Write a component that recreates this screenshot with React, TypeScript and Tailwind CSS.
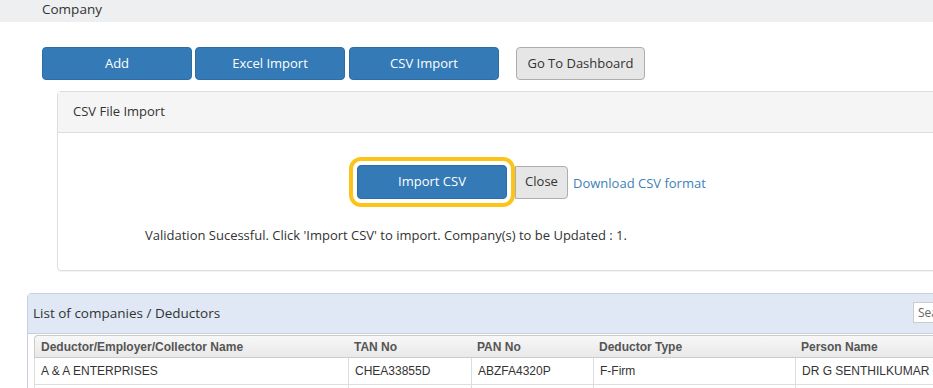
import React from 'react'

const seg = { fontFamily: '"Open Sans", "Noto Sans", sans-serif' }

const rows = [
  { name: 'A & A ENTERPRISES', tan: 'CHEA33855D', pan: 'ABZFA4320P', type: 'F-Firm', person: 'DR G SENTHILKUMAR' },
]

export default function App() {
  return (
    <div className="w-[933px] h-[388px] overflow-hidden bg-white text-[#333]" style={seg}>
      {/* Page title */}
      <div className="h-[22px] bg-[#eeeff1] pl-[42px] text-[13.5px] leading-[18px]">Company</div>

      {/* Action buttons */}
      <div className="flex items-center mt-[25px] pl-[42px]">
        <button className="w-[150px] h-[33px] rounded bg-[#337ab7] border border-[#2e6da4] text-white text-[13px]">Add</button>
        <button className="w-[150px] h-[33px] ml-[3px] rounded bg-[#337ab7] border border-[#2e6da4] text-white text-[13px]">Excel Import</button>
        <button className="w-[150px] h-[33px] ml-[4px] rounded bg-[#337ab7] border border-[#2e6da4] text-white text-[13px]">CSV Import</button>
        <button className="w-[129px] h-[33px] ml-[17px] rounded bg-[#e6e6e6] border border-[#adadad] text-[#333] text-[13px]">Go To Dashboard</button>
      </div>

      {/* CSV import panel */}
      <div className="ml-[57px] mt-[11px] w-[960px] h-[180px] border border-[#ddd] rounded shadow-[0_1px_1px_rgba(0,0,0,0.05)]">
        <div className="h-[41px] bg-[#f5f5f5] border-b border-[#ddd] pl-[15px] flex items-center text-[13px]">CSV File Import</div>
        <div className="flex items-center pl-[299px] pt-[32px]">
          <div className="relative">
            <button className="w-[150px] h-[34px] rounded bg-[#337ab7] border border-[#2e6da4] text-white text-[13px]">Import CSV</button>
            <div className="absolute -left-[8px] -top-[8px] w-[166px] h-[50px] border-[4px] border-[#fcc419] rounded-[12px]" />
          </div>
          <button className="w-[53px] h-[33px] ml-[8px] rounded-r bg-[#e6e6e6] border border-[#adadad] text-[#333] text-[13px]">Close</button>
          <a className="ml-[5px] mt-[4px] text-[13px] text-[#3f7fb8]">Download CSV format</a>
        </div>
        <div className="pl-[87px] mt-[27px] text-[13px]">
          Validation Sucessful. Click 'Import CSV' to import. Company(s) to be Updated : 1.
        </div>
      </div>

      {/* Companies list */}
      <div className="ml-[27px] mt-[22px] w-[960px] border border-[#c5d1df] rounded-tl">
        <div className="h-[40px] bg-[#dfe8f4] border-b border-[#c5d1df] flex items-center pl-[5px]">
          <span className="w-[880px] text-[13.5px]">List of companies / Deductors</span>
          <input
            className="w-[60px] h-[21px] mt-[-2px] border border-[#ccc] bg-white px-[4px] text-[12px] text-[#666] placeholder:text-[#666]"
            placeholder="Search"
          />
        </div>
        <div className="pl-[6px] pt-[1px] bg-white">
          <table
            className="table-fixed w-[941px] border-separate border-spacing-0 text-[12px]"
            style={{ fontFamily: '"Liberation Sans", Arial, sans-serif' }}
          >
            <colgroup>
              <col className="w-[314px]" />
              <col className="w-[123px]" />
              <col className="w-[122px]" />
              <col className="w-[202px]" />
              <col className="w-[180px]" />
            </colgroup>
            <thead>
              <tr className="h-[23px] bg-gradient-to-b from-[#f8f8f8] to-[#e8e8e8] text-[#555] font-bold text-left">
                <th className="pl-[6px] border-t border-l border-b border-[#ccc] rounded-tl">Deductor/Employer/Collector Name</th>
                <th className="pl-[6px] border-t border-b border-[#ccc]">TAN No</th>
                <th className="pl-[6px] border-t border-b border-[#ccc]">PAN No</th>
                <th className="pl-[6px] border-t border-b border-[#ccc]">Deductor Type</th>
                <th className="pl-[6px] border-t border-b border-[#ccc]">Person Name</th>
              </tr>
            </thead>
            <tbody className="text-[#333]">
              {rows.map((r) => (
                <tr key={r.tan} className="h-[27px]">
                  <td className="pl-[6px] border-l border-b border-[#ddd]">{r.name}</td>
                  <td className="pl-[6px] border-l border-b border-[#ddd]">{r.tan}</td>
                  <td className="pl-[6px] border-l border-b border-[#ddd]">{r.pan}</td>
                  <td className="pl-[6px] border-l border-b border-[#ddd]">{r.type}</td>
                  <td className="pl-[6px] border-l border-b border-[#ddd]">{r.person}</td>
                </tr>
              ))}
              <tr className="h-[27px]">
                <td className="border-l border-[#ddd]" />
                <td className="border-l border-[#ddd]" />
                <td className="border-l border-[#ddd]" />
                <td className="border-l border-[#ddd]" />
                <td className="border-l border-[#ddd]" />
              </tr>
            </tbody>
          </table>
        </div>
      </div>
    </div>
  )
}
